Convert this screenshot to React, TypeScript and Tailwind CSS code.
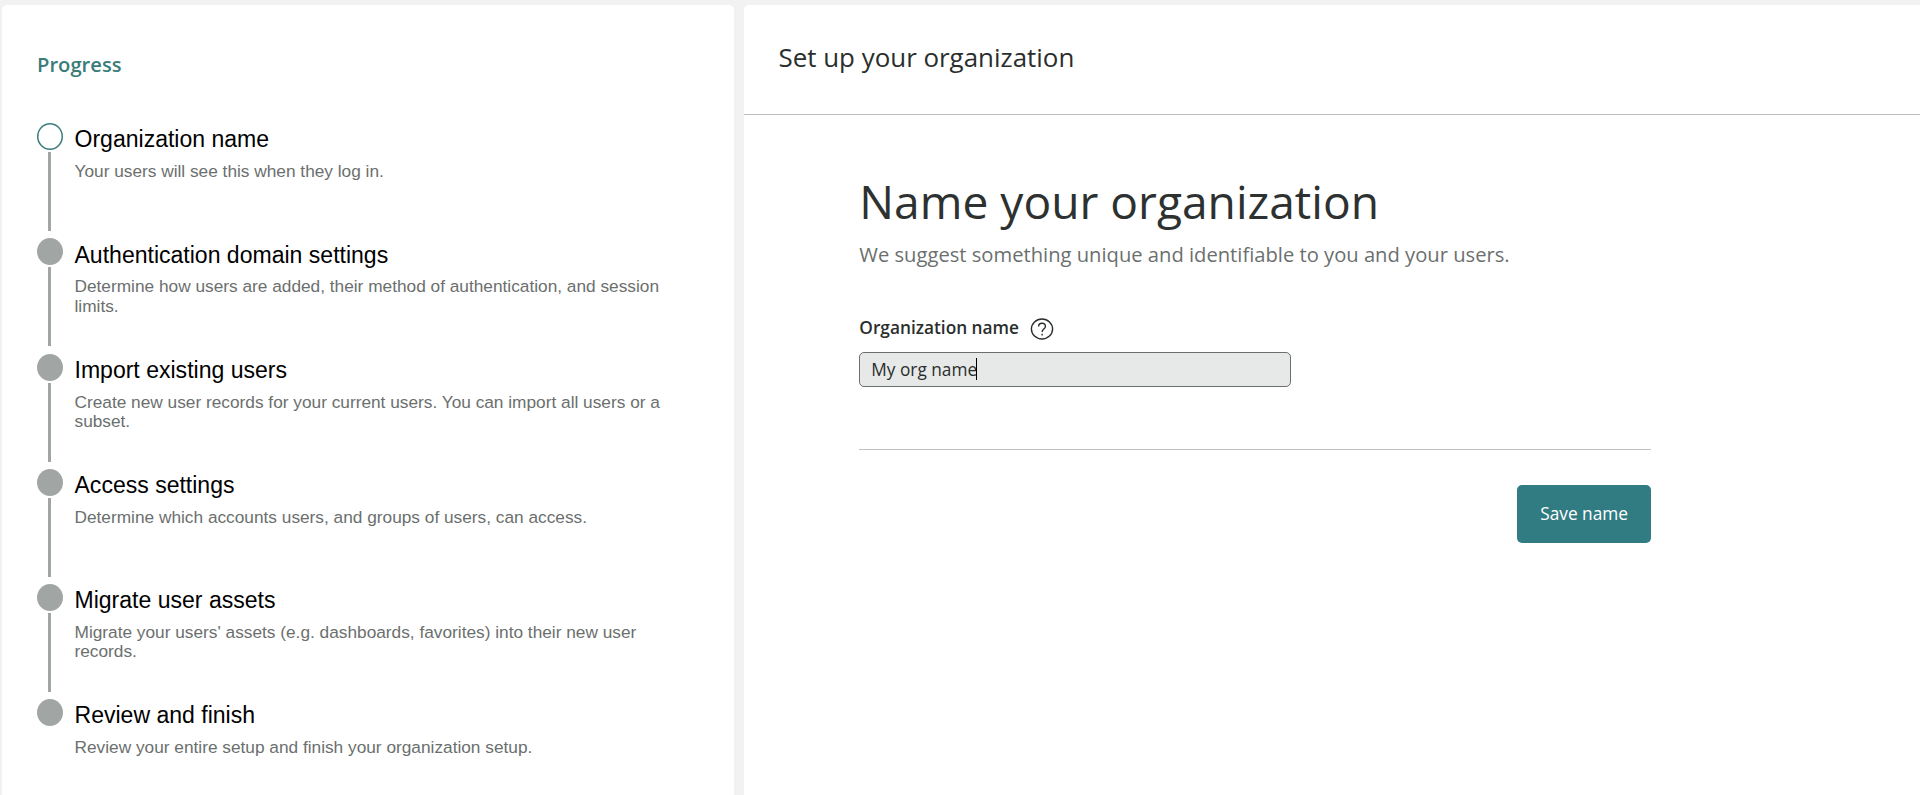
const steps = [
  { title: "Organization name", text: "Your users will see this when they log in." },
  {
    title: "Authentication domain settings",
    text: "Determine how users are added, their method of authentication, and session limits.",
  },
  {
    title: "Import existing users",
    text: "Create new user records for your current users. You can import all users or a subset.",
  },
  {
    title: "Access settings",
    text: "Determine which accounts users, and groups of users, can access.",
  },
  {
    title: "Migrate user assets",
    text: "Migrate your users' assets (e.g. dashboards, favorites) into their new user records.",
  },
  { title: "Review and finish", text: "Review your entire setup and finish your organization setup." },
];

function Step({ title, text, active, last }: { title: string; text: string; active: boolean; last: boolean }) {
  return (
    <li className="flex h-[115.2px]">
      <div className="flex w-[26px] shrink-0 flex-col items-center">
        <span
          className={
            active
              ? "h-[27px] w-[26px] shrink-0 rounded-[50%] bg-white shadow-[inset_0_0_0_1.5px_#3a7c7a]"
              : "h-[27px] w-[26px] shrink-0 rounded-[50%] bg-[#a1a5a4]"
          }
        />
        {!last && <span className="mt-[2px] h-[79px] w-[3px] bg-[#a1a5a4]" />}
      </div>
      <div className="ml-[12px] w-[600px] pt-[3.2px] font-['Liberation_Sans',sans-serif]">
        <h3 className="text-[23.04px] leading-[26px] text-black">{title}</h3>
        <p className="mt-[9.8px] text-[17.28px] leading-[19.2px] text-[#6b6f6e]">{text}</p>
      </div>
    </li>
  );
}

function HelpIcon() {
  return (
    <svg viewBox="0 0 24 24" className="h-6 w-6" fill="none" stroke="#2a2e2d" strokeWidth="1.4">
      <ellipse cx="12" cy="12" rx="10.6" ry="10" />
      <path d="M8.6 9.5c0-2 1.4-3.2 3.4-3.2s3.4 1.2 3.4 3.1c0 2.5-3.3 2.6-3.3 5.5" />
      <path d="M12.1 16.8v1.8" />
    </svg>
  );
}

export default function App() {
  return (
    <div className="flex h-[795px] w-full gap-[10.5px] overflow-hidden bg-[#f2f2f2] pt-[5px] pl-[2px] font-['Open_Sans',sans-serif]">
      <aside className="w-[731.5px] shrink-0 rounded-t-[5px] bg-white pt-[45px] pl-[34.5px]">
        <h2 className="ml-[0.5px] text-[20.16px] leading-7 font-semibold text-[#3a7c7a]">Progress</h2>
        <ol className="mt-[45.2px]">
          {steps.map((step, i) => (
            <Step key={step.title} {...step} active={i === 0} last={i === steps.length - 1} />
          ))}
        </ol>
      </aside>

      <main className="grow rounded-tl-[5px] bg-white">
        <header className="h-[110px] border-b border-[#bcc0bf] pt-[34px] pl-[34.5px]">
          <h2 className="text-[25.92px] leading-9 text-[#2a2e2d]">Set up your organization</h2>
        </header>
        <section className="ml-[115.3px] w-[792px] pt-[57.4px]">
          <h1 className="text-[46.15px] leading-[60px] text-[#2d3231]">Name your organization</h1>
          <p className="mt-[8px] text-[20.18px] leading-7 text-[#6b6f6e]">
            We suggest something unique and identifiable to you and your users.
          </p>
          <div className="mt-[48px] flex h-6 items-center gap-[10.5px]">
            <label className="text-[17.28px] leading-6 font-semibold text-[#2a2e2d]">Organization name</label>
            <span className="pt-[2px]">
              <HelpIcon />
            </span>
          </div>
          <div className="mt-[11.6px] flex h-[35px] w-[432px] items-center rounded-[5px] border border-[#6b6f6e] bg-[#e7e9e8] pl-[11px]">
            <span className="pt-[2px] text-[17.28px] leading-6 text-[#2a2e2d]">My org name</span>
            <span className="-ml-px h-[22px] w-px bg-black" />
          </div>
          <hr className="mt-[62.5px] border-t border-[#bfc2c2]" />
          <div className="mt-[34.5px] flex justify-end">
            <button className="h-[57.6px] w-[134.4px] rounded-[5px] bg-[#317b82] text-[17.28px] leading-6 text-white">
              Save name
            </button>
          </div>
        </section>
      </main>
    </div>
  );
}
